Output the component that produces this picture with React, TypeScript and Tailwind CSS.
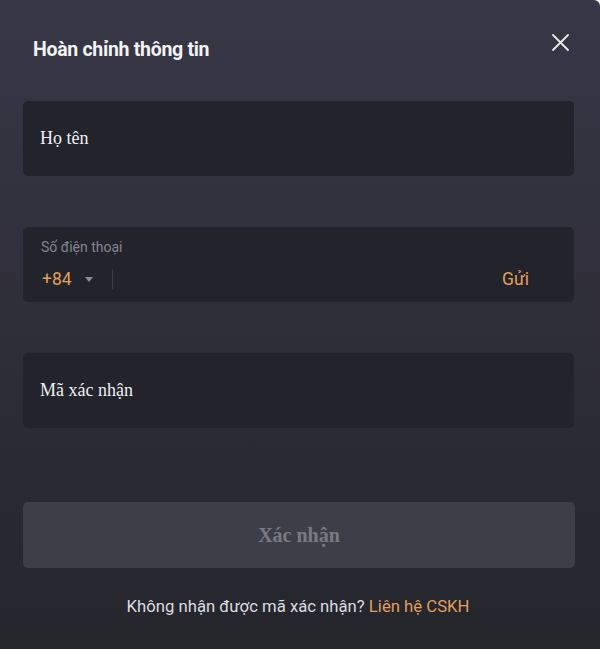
import React from 'react';

const App: React.FC = () => {
  return (
    <div className="w-[600px] h-[649px] bg-gradient-to-b from-[#383746] to-[#25252c] rounded-tr-[6px] font-['Roboto',sans-serif] relative">
      <div className="flex items-center justify-between pl-[33px] pr-[31px] pt-[36px]">
        <h1 className="text-[19.5px] font-bold text-[#f2f2f4] leading-[28px] tracking-[-0.3px]">Hoàn chỉnh thông tin</h1>
        <button className="text-[#e8e8ec] -mt-[16px]">
          <svg width="17" height="17" viewBox="0 0 17 17" fill="none" stroke="currentColor" strokeWidth="1.8" strokeLinecap="round">
            <path d="M1 1L16 16M16 1L1 16" />
          </svg>
        </button>
      </div>

      <div className="pl-[23px] pr-[26px] pt-[37px] flex flex-col">
        <div className="h-[75px] rounded-[5px] bg-[#23232b] flex items-center px-[17px]">
          <span className="font-['Liberation_Serif',serif] text-[18px] text-[#f0f0f2]">Họ tên</span>
        </div>

        <div className="h-[75px] mt-[51px] rounded-[5px] bg-[#23232b] px-[18px] pt-[10px]">
          <div className="text-[14px] text-[#85858f] leading-[20px]">Số điện thoại</div>
          <div className="flex items-center mt-[10px] h-[24px]">
            <span className="text-[17.5px] text-[#e29f5c] pl-[1px]">+84</span>
            <span className="ml-[13px] w-0 h-0 border-l-[4px] border-r-[4px] border-t-[5px] border-l-transparent border-r-transparent border-t-[#8c8c96]" />
            <span className="ml-[19px] w-px h-[20px] bg-[#3d3d47]" />
            <span className="ml-auto mr-[27px] text-[17.5px] text-[#e29f5c]">Gửi</span>
          </div>
        </div>

        <div className="h-[75px] mt-[51px] rounded-[5px] bg-[#23232b] flex items-center px-[17px]">
          <span className="font-['Liberation_Serif',serif] text-[18px] text-[#f0f0f2]">Mã xác nhận</span>
        </div>
      </div>

      <div className="pl-[23px] pr-[25px] pt-[74px]">
        <button className="w-full h-[66px] rounded-[5px] bg-[#3e3e49] font-['Liberation_Serif',serif] font-bold text-[20px] text-[#7a7a82]">
          Xác nhận
        </button>
      </div>

      <p className="text-center text-[16.7px] text-[#dcdce0] mt-[26px] pr-[4px]">
        Không nhận được mã xác nhận? <span className="text-[#e29f5c]">Liên hệ CSKH</span>
      </p>
    </div>
  );
};

export default App;
